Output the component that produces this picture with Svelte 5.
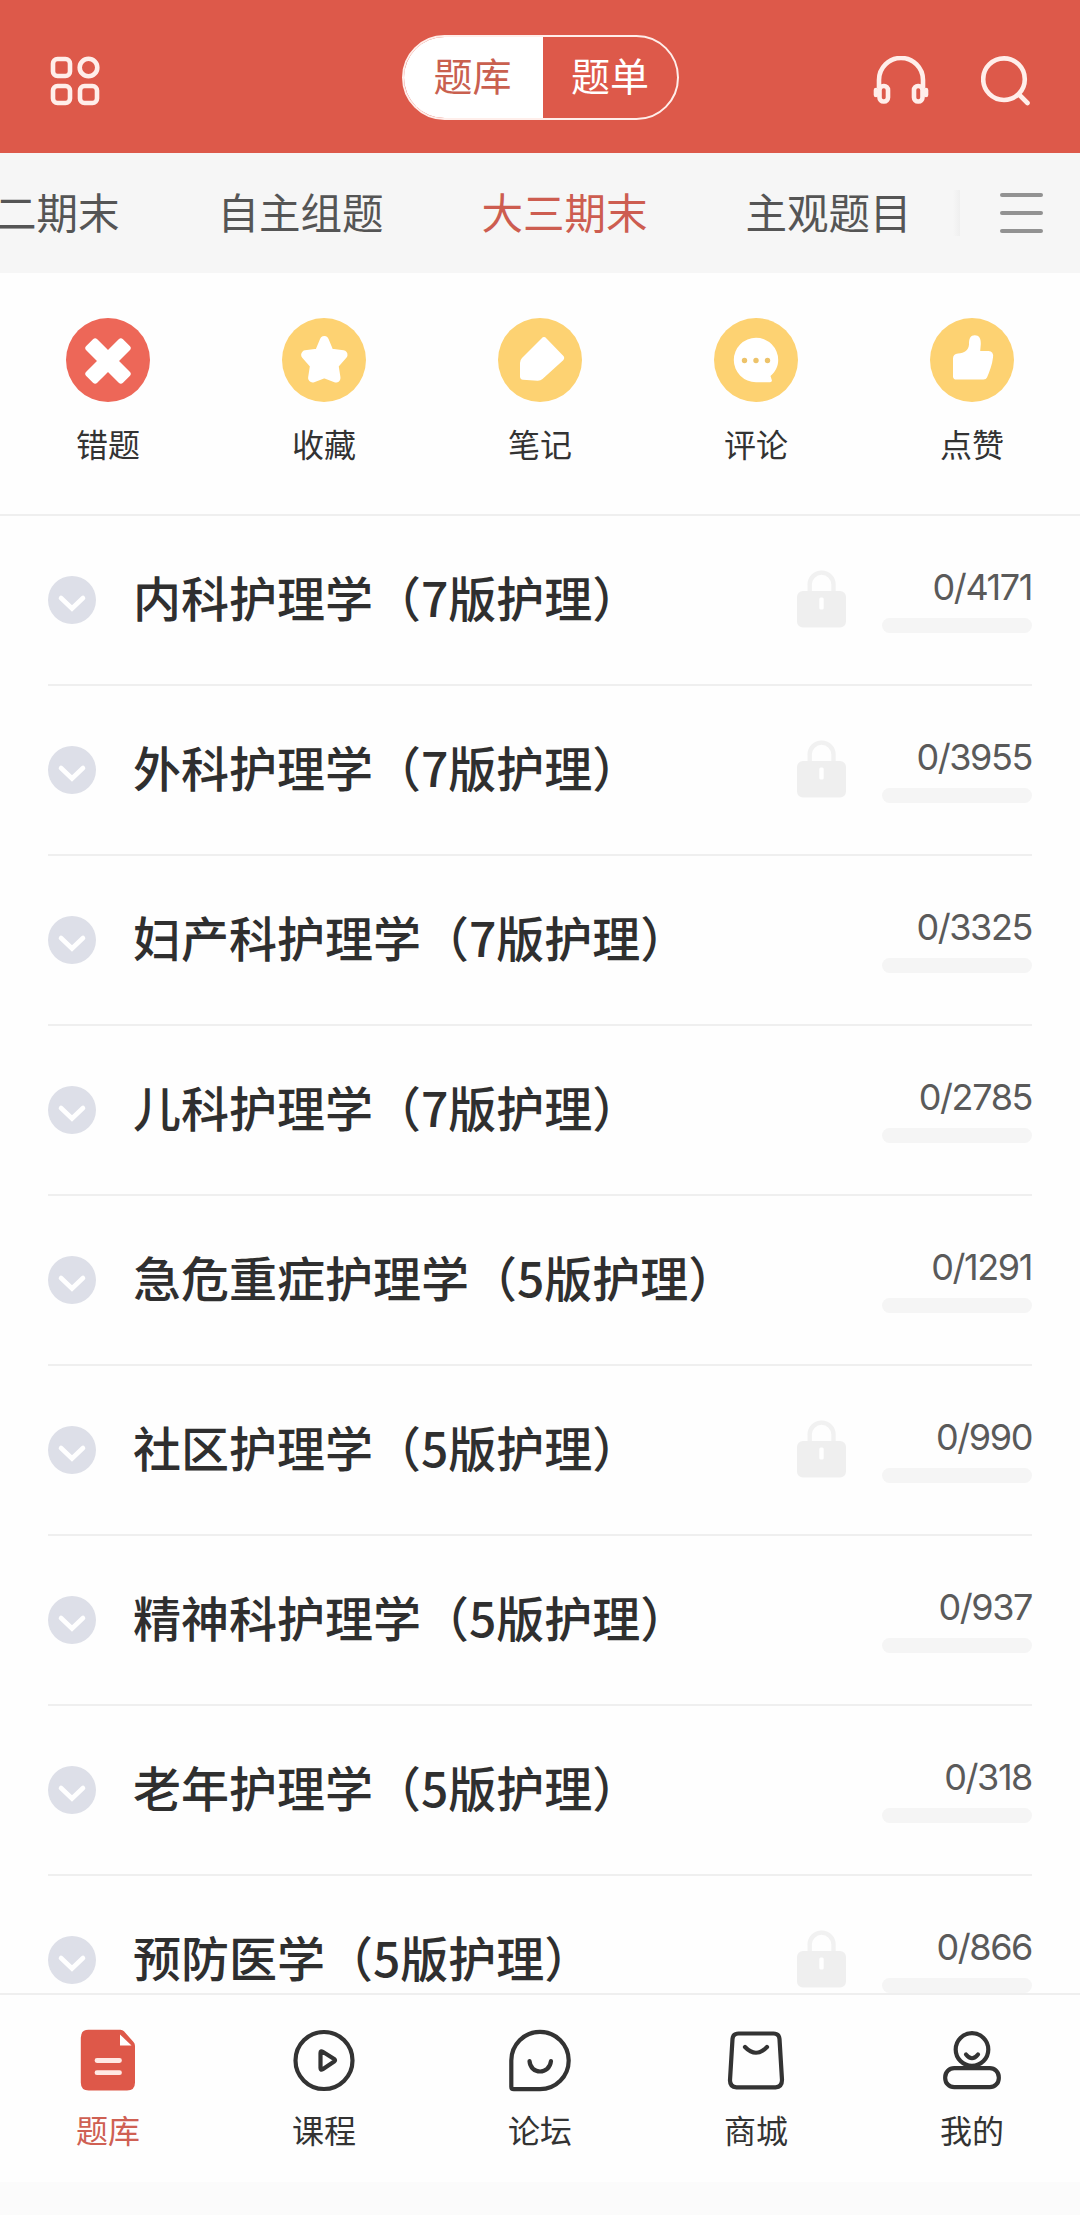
<script lang="ts">
    type Subject = { name: string; total: number; locked: boolean };

    const tabs: string[] = ['大二期末', '自主组题', '大三期末', '主观题目'];
    const actions: string[] = ['错题', '收藏', '笔记', '评论', '点赞'];
    const navItems: string[] = ['题库', '课程', '论坛', '商城', '我的'];

    const subjects: Subject[] = [
        { name: '内科护理学（7版护理）', total: 4171, locked: true },
        { name: '外科护理学（7版护理）', total: 3955, locked: true },
        { name: '妇产科护理学（7版护理）', total: 3325, locked: false },
        { name: '儿科护理学（7版护理）', total: 2785, locked: false },
        { name: '急危重症护理学（5版护理）', total: 1291, locked: false },
        { name: '社区护理学（5版护理）', total: 990, locked: true },
        { name: '精神科护理学（5版护理）', total: 937, locked: false },
        { name: '老年护理学（5版护理）', total: 318, locked: false },
        { name: '预防医学（5版护理）', total: 866, locked: true },
    ];

    let mode = $state('题库');
    let activeTab = $state('大三期末');
    let activeNav = $state('题库');
</script>

<div class="app">
    <header class="header">
        <svg class="icon-grid" width="50" height="50" viewBox="0 0 50 50">
            <rect x="3" y="3" width="17" height="17" rx="4.5" />
            <circle cx="38.5" cy="11.5" r="8.8" />
            <rect x="3" y="30" width="17" height="17" rx="4.5" />
            <rect x="30" y="30" width="17" height="17" rx="4.5" />
        </svg>

        <div class="switch">
            {#each ['题库', '题单'] as item}
                <button class="switch-item" class:on={mode === item} onclick={() => (mode = item)}>{item}</button>
            {/each}
        </div>

        <div class="header-right">
            <svg width="56" height="50" viewBox="0 0 56 50">
                <path d="M6 32V24a22 22 0 0 1 44 0v8" />
                <rect x="6.5" y="30" width="8.5" height="15.5" rx="4" />
                <rect x="41" y="30" width="8.5" height="15.5" rx="4" />
                <path d="M3 34v5M53 34v5" stroke-linecap="round" />
            </svg>
            <svg width="50" height="50" viewBox="0 0 50 50">
                <circle cx="23" cy="23.2" r="20.8" />
                <path d="M38 38.5l8.5 8.5" stroke-linecap="round" />
            </svg>
        </div>
    </header>

    <div class="tabs">
        <div class="tab-list">
            {#each tabs as tab}
                <button class="tab" class:active={activeTab === tab} onclick={() => (activeTab = tab)}>{tab}</button>
            {/each}
        </div>
        <div class="tab-shade"></div>
        <div class="menu"><i></i><i></i><i></i></div>
    </div>

    <div class="actions">
        {#each actions as action, i}
            <div class="action">
                <svg width="84" height="84" viewBox="0 0 84 84" fill="#fff">
                    <circle cx="42" cy="42" r="42" fill={i === 0 ? '#ed6758' : '#fdd272'} />
                    {#if i === 0}
                        <g transform="rotate(45 42 43)">
                            <rect x="16" y="35.2" width="52" height="15.6" rx="3" />
                            <rect x="34.2" y="17" width="15.6" height="52" rx="3" />
                        </g>
                    {:else if i === 1}
                        <path
                            d="M42.3 22.5L47.5 35 61 36.8 52 47 54 60 42.3 55.5 30.6 60 32.6 47 23.6 36.8 37.1 35z"
                            stroke="#fff" stroke-width="9" stroke-linejoin="round" />
                    {:else if i === 2}
                        <path d="M43.5 20.4q2.5-2.6 5 0L65.2 37.8q2 2.2 0 4.4L44.5 61q-2 1.8-5 1.7L25 61.8q-3-.3-3-3.3V45q0-3 2-5z" />
                    {:else if i === 3}
                        <path d="M42 64.2A22.2 22.2 0 1 1 64.2 42c0 6-2.4 11.5-7.7 16l1.3 4q.5 2.2-1.8 2.200z" />
                        <g fill="#edc36a">
                            <circle cx="30.5" cy="42.5" r="2.7" />
                            <circle cx="42" cy="42.5" r="2.7" />
                            <circle cx="53.5" cy="42.5" r="2.7" />
                        </g>
                    {:else}
                        <path d="M39 26.5C39 20 40.5 17.3 44.8 17.3S51 20.5 50.800 26L50.2 33H58.5Q63.8 33 63 39.5C62.2 47 59.5 53.5 57 59.5Q56.2 61.6 53.5 61.6H26.5Q23 61.6 23 58.5V40.5Q23 35.8 28 35.5C34.5 35.2 38.6 32 39 26.5z" />
                    {/if}
                </svg>
                <span>{action}</span>
            </div>
        {/each}
    </div>

    <div class="list">
        {#each subjects as subject}
            <div class="row">
                <svg class="arrow" width="48" height="48" viewBox="0 0 48 48">
                    <circle cx="24" cy="24" r="24" fill="#dddfe8" />
                    <path d="M13 22L24 32.500 35 22" fill="none" stroke="#fff" stroke-width="4.6" stroke-linecap="round" />
                </svg>
                <div class="name">{subject.name}</div>
                {#if subject.locked}
                    <svg class="lock" width="49" height="58" viewBox="0 0 49 58">
                        <path d="M12.7 24V14.5a11.900 11.900 0 0 1 23.8 0V24" fill="none" stroke="#f1f1f1" stroke-width="4.4" />
                        <rect x="0" y="21" width="49" height="36.5" rx="6" fill="#efefef" />
                        <rect x="22.3" y="27.5" width="4.4" height="12" rx="1.5" fill="#fff" />
                    </svg>
                {/if}
                <div class="progress">
                    <span class="count">0/{subject.total}</span>
                    <div class="bar"></div>
                </div>
            </div>
        {/each}
    </div>

    <nav class="nav">
        {#each navItems as item, i}
            <button class="nav-item" class:active={activeNav === item} onclick={() => (activeNav = item)}>
                <svg width="64" height="64" viewBox="0 0 64 64">
                    {#if i === 0}
                        <path d="M12.5 1.8H44.500q2 0 3.500 1.500L57.500 14q1.500 1.700 1.500 4V54.500q0 8-8 8H12.800q-8 0-8-8V9.800q0-8 7.700-8z" fill="#de5849" stroke="none" />
                        <path d="M44 6.500V17.500H55.500z" fill="#fff" stroke="none" />
                        <path d="M21 32.500H43.500M21 44.700H43.500" stroke="#ffe9e4" stroke-width="4.800" />
                    {:else if i === 1}
                        <circle cx="32" cy="32.500" r="28.500" />
                        <path d="M28.500 25q0-2.500 2.200-1.200L42.200 31q1.700 1.300 0 2.600L30.700 41.300q-2.200 1.300-2.200-1.200z" />
                    {:else if i === 2}
                        <path d="M32 61.200H5.800q-2.500 0-2.500-2.500V32.500A28.700 28.700 0 1 1 32 61.200z" />
                        <path d="M21.500 33c1 14 20 14 21.500 0" />
                    {:else if i === 3}
                        <path d="M14.500 5.500H49.500q5.500 0 6 5.500L58 52q0 7-6.500 7.300H12.500Q5.800 59 6 52L8.500 11q.5-5.500 6-5.500z" />
                        <path d="M21 19q11 11.500 22 0" />
                    {:else}
                        <circle cx="32" cy="21.500" r="16.300" />
                        <rect x="5.200" y="40.200" width="53.600" height="19" rx="9" />
                        <path d="M26 26.500q6 7.500 12 0" />
                    {/if}
                </svg>
                <span>{item}</span>
            </button>
        {/each}
    </nav>
    <div class="safe-area"></div>
</div>

<style>
    :global(body) {
        margin: 0;
    }

    .app {
        display: flex;
        flex-direction: column;
        width: 1080px;
        height: 2215px;
        overflow: hidden;
        background-color: #fefefe;
        color: #333;
        font-family: 'Noto Sans CJK SC', sans-serif;
    }

    button {
        margin: 0;
        padding: 0;
        border: none;
        background: none;
        font-family: inherit;
        color: inherit;
        white-space: nowrap;
        cursor: pointer;
    }

    svg {
        display: block;
        flex-shrink: 0;
    }

    .header {
        display: grid;
        grid-template-columns: 1fr 277px 1fr;
        align-items: center;
        box-sizing: border-box;
        flex: 0 0 153px;
        padding: 2px 49px 0 50px;
        background-color: #dd594a;
    }

    .header svg {
        fill: none;
        stroke: #ffeeea;
        stroke-width: 4.6;
    }

    .icon-grid {
        margin-top: 7px;
    }

    .switch {
        display: flex;
        box-sizing: border-box;
        height: 85px;
        border: 2px solid #ffeeea;
        border-radius: 43px;
        overflow: hidden;
    }

    .switch-item {
        flex: 1;
        padding-bottom: 6px;
        font-size: 39px;
        line-height: 75px;
        color: #fff;
    }

    .switch-item.on {
        flex: 0 0 139px;
        padding-right: 2px;
        background-color: #fff;
        color: #c9604f;
    }

    .header-right {
        display: flex;
        justify-content: flex-end;
        gap: 52px;
        margin-top: 7px;
    }

    .tabs {
        display: flex;
        align-items: center;
        flex: 0 0 120px;
        background-color: #f6f6f6;
    }

    .tab-list {
        display: flex;
        gap: 97px;
        width: 953px;
        overflow: hidden;
    }

    .tab {
        flex: 0 0 167px;
        padding-bottom: 5px;
        font-size: 41.5px;
        line-height: 60px;
        color: #555;
    }

    .tab:first-child {
        margin-left: -47px;
    }

    .tab.active {
        color: #cd5d50;
    }

    .tab-shade {
        width: 7px;
        height: 46px;
        background: linear-gradient(to right, #f6f6f6, #efefef);
    }

    .menu {
        display: flex;
        flex-direction: column;
        gap: 14px;
        margin-left: 40px;
    }

    .menu i {
        width: 43px;
        height: 4px;
        border-radius: 2px;
        background-color: #929292;
    }

    .actions {
        display: flex;
        box-sizing: border-box;
        flex: 0 0 243px;
        padding-top: 45px;
        border-bottom: 2px solid #efefef;
    }

    .action {
        display: flex;
        flex-direction: column;
        align-items: center;
        flex: 1;
        gap: 18px;
        font-size: 32px;
        line-height: 46px;
    }

    .list {
        flex: 1;
        min-height: 0;
        padding: 0 48px;
        overflow: hidden;
    }

    .row {
        display: flex;
        align-items: center;
        box-sizing: border-box;
        height: 170px;
        border-bottom: 2px solid #efefef;
    }

    .name {
        flex: 1;
        margin: -9px 0 0 37px;
        font-size: 48px;
        font-weight: 500;
        line-height: 70px;
        white-space: nowrap;
        color: #2f2f2f;
    }

    .lock {
        margin: -2px 36px 0 0;
    }

    .progress {
        display: flex;
        flex-direction: column;
        align-items: flex-end;
        width: 150px;
        margin-top: -3px;
    }

    .count {
        font-family: Inter, 'Noto Sans CJK SC', sans-serif;
        font-size: 36px;
        line-height: 44px;
        letter-spacing: -1.4px;
        color: #5a5a5a;
    }

    .bar {
        width: 150px;
        height: 15px;
        margin-top: 9px;
        border-radius: 8px;
        background-color: #f5f5f5;
    }

    .nav {
        display: flex;
        box-sizing: border-box;
        flex: 0 0 189px;
        padding-top: 33px;
        border-top: 2px solid #efefef;
    }

    .nav-item {
        display: flex;
        flex-direction: column;
        align-items: center;
        flex: 1;
        gap: 14px;
        font-size: 32px;
        line-height: 46px;
    }

    .nav-item svg {
        fill: none;
        stroke: #333;
        stroke-width: 4.2;
        stroke-linecap: round;
        stroke-linejoin: round;
    }

    .nav-item.active {
        color: #cf6053;
    }

    .safe-area {
        flex: 0 0 33px;
        background-color: #fbfbfb;
    }
</style>
